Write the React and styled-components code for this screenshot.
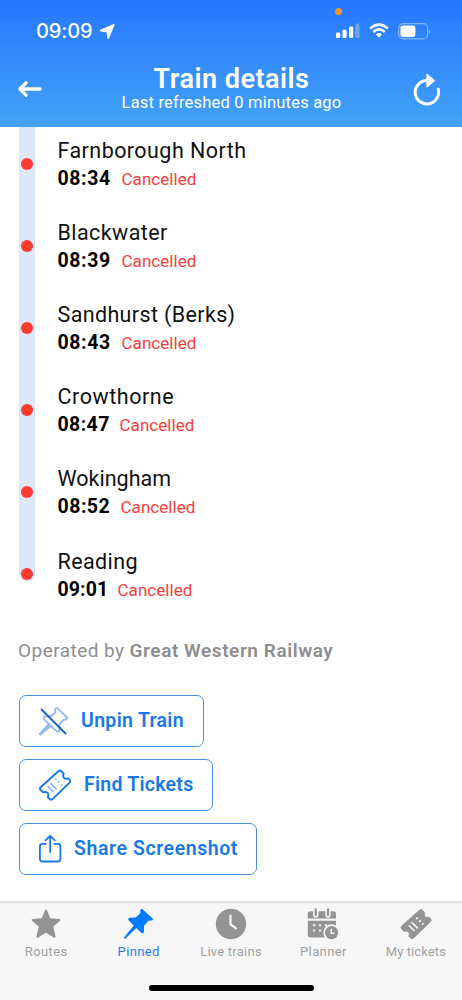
import React from 'react';
import styled, { createGlobalStyle } from 'styled-components';

const GlobalStyle = createGlobalStyle`
  * {
    box-sizing: border-box;
  }
  body {
    margin: 0;
    background: #fff;
    font-family: Roboto, 'Liberation Sans', sans-serif;
  }
`;

const Screen = styled.div`
  position: relative;
  display: flex;
  flex-direction: column;
  width: 462px;
  height: 1000px;
  overflow: hidden;
  background: #fff;
`;

const Header = styled.header`
  flex: none;
  height: 127px;
  color: #fff;
  background: linear-gradient(#2777ff, #43a2f6);
`;

const StatusBar = styled.div`
  display: flex;
  align-items: center;
  justify-content: space-between;
  height: 62px;
  padding: 0 31px 0 36px;
`;

const Clock = styled.div`
  display: flex;
  align-items: center;
  gap: 6px;
  font: 500 20px/24px Inter, sans-serif;
  letter-spacing: -0.1px;
`;

const StatusIcons = styled.div`
  display: flex;
  align-items: center;
  gap: 9px;
`;

const RecordingDot = styled.span`
  position: absolute;
  top: 8px;
  left: 335px;
  width: 7px;
  height: 7px;
  border-radius: 50%;
  background: #f09528;
`;

const NavBar = styled.div`
  display: flex;
  align-items: center;
  justify-content: space-between;
  height: 53px;
  padding: 0 21px 0 18px;
`;

const IconButton = styled.button`
  display: flex;
  padding: 0;
  border: 0;
  color: inherit;
  background: none;
`;

const Heading = styled.div`
  flex: 1;
  padding-left: 7px;
  text-align: center;
`;

const Title = styled.h1`
  margin: 0;
  font-size: 27px;
  font-weight: 600;
  line-height: 28px;
  white-space: nowrap;
  letter-spacing: 0.5px;
`;

const Subtitle = styled.div`
  font-size: 16.5px;
  line-height: 19px;
  white-space: nowrap;
  letter-spacing: 0.2px;
`;

const Stops = styled.ul`
  display: flex;
  flex-direction: column;
  flex: none;
  margin: 0;
  padding: 0 0 0 18.5px;
  list-style: none;
`;

const Stop = styled.li`
  display: flex;
  height: ${({ $last }) => ($last ? 76 : 82.2)}px;
`;

const Track = styled.div`
  flex: none;
  width: 16.5px;
  height: ${({ $last }) => ($last ? '43px' : '100%')};
  padding: 30.5px 0 0 2px;
  border-radius: ${({ $last }) => ($last ? '0 0 7px 7px' : 0)};
  background: #dce8f8;
`;

const Dot = styled.div`
  width: 12px;
  height: 12px;
  border-radius: 50%;
  background: #ff3b30;
`;

const StopBody = styled.div`
  padding: 9.6px 0 0 22.5px;
`;

const StopName = styled.div`
  color: #111;
  font-size: 21.5px;
  line-height: 27px;
  white-space: nowrap;
  letter-spacing: ${({ $tracking }) => $tracking || 0}px;
`;

const StopStatus = styled.div`
  display: flex;
  align-items: baseline;
  padding-top: 3px;
  line-height: 24px;
`;

const Time = styled.span`
  width: ${({ $width }) => $width}px;
  color: #000;
  font-size: 19.5px;
  font-weight: 700;
  letter-spacing: ${({ $tracking }) => $tracking || 0}px;
`;

const Cancelled = styled.span`
  color: #f6403c;
  font-size: 17px;
  letter-spacing: 0.05px;
`;

const Operator = styled.p`
  flex: none;
  margin: 0;
  padding: 25.5px 0 0 18px;
  color: #8e8e90;
  font-size: 19px;
  line-height: 24px;
  white-space: nowrap;

  span {
    letter-spacing: 0.45px;
  }

  b {
    font-weight: 600;
    letter-spacing: 0.56px;
  }
`;

const Actions = styled.div`
  display: flex;
  flex-direction: column;
  align-items: flex-start;
  gap: 12px;
  padding: 32px 0 0 19px;
`;

const ActionButton = styled.button`
  display: flex;
  align-items: center;
  gap: ${({ $gap }) => $gap}px;
  width: ${({ $width }) => $width}px;
  height: 52px;
  padding: 0 0 0 18px;
  border: 1.5px solid #4a8fdc;
  border-radius: 7px;
  color: #1878e8;
  background: #fff;
  font: 600 19.5px/24px Roboto, sans-serif;
  white-space: nowrap;
  letter-spacing: ${({ $tracking }) => $tracking || 0}px;
`;

const TabBar = styled.nav`
  flex: none;
  display: flex;
  height: 99px;
  margin-top: auto;
  border-top: 2px solid #e2e2e2;
  background: #f7f7f7;
`;

const Tab = styled.a`
  display: flex;
  flex: 1;
  flex-direction: column;
  align-items: center;
  gap: 3px;
  padding-top: 5px;
  color: ${({ $active }) => ($active ? '#007aff' : '#949494')};
`;

const TabLabel = styled.span`
  color: ${({ $active }) => ($active ? '#1a80f5' : '#a2a2a2')};
  font-size: 13px;
  line-height: 16px;
  white-space: nowrap;
  letter-spacing: ${({ $tracking }) => $tracking || 0}px;
`;

const HomeIndicator = styled.div`
  position: absolute;
  bottom: 9px;
  left: 149px;
  width: 165px;
  height: 6px;
  border-radius: 3px;
  background: #000;
`;

const LocationIcon = () => (
  <svg width="17" height="17" viewBox="0 0 17 17">
    <path d="M14.9 1.7 1.7 7.6 8.3 8.6 9.2 15.2Z" fill="#fff" stroke="#fff" strokeWidth="1.6" strokeLinejoin="round" />
  </svg>
);

const SignalIcon = () => (
  <svg width="24" height="16" viewBox="0 0 24 16" fill="#fff">
    <rect x="0" y="9.5" width="4.2" height="5.5" rx="1.2" />
    <rect x="6.5" y="6.8" width="4.2" height="8.2" rx="1.2" />
    <rect x="13" y="3.5" width="4.2" height="11.5" rx="1.2" />
    <rect x="19.2" y="0.5" width="4.2" height="14.5" rx="1.2" opacity="0.3" />
  </svg>
);

const WifiIcon = () => (
  <svg width="20" height="16" viewBox="0 0 20 16" fill="none" stroke="#fff" strokeWidth="2.5">
    <path d="M1 5.6Q10-2.4 19 5.6" />
    <path d="M4.3 9Q10 3.8 15.7 9" />
    <path d="M7 11.4Q10 8.8 13 11.4L10 14.5Z" fill="#fff" stroke="none" />
  </svg>
);

const BatteryIcon = () => (
  <svg width="33" height="17" viewBox="0 0 33 17">
    <rect x="0.7" y="0.7" width="29" height="15.2" rx="4.5" fill="none" stroke="#fff" strokeOpacity="0.4" strokeWidth="1.2" />
    <rect x="2.4" y="2.6" width="15" height="11.4" rx="2.4" fill="#fff" />
    <path d="M31 6v5q2-2.5 0-5Z" fill="#fff" opacity="0.5" />
  </svg>
);

const BackIcon = () => (
  <svg width="25" height="18" viewBox="0 0 25 18" fill="none" stroke="#fff" strokeWidth="3.3" strokeLinecap="round" strokeLinejoin="round">
    <path d="M22 9H2.3M8 2.8 1.9 9 8 15.2" />
  </svg>
);

const RefreshIcon = () => (
  <svg width="28" height="34" viewBox="0 0 28 34">
    <path d="M25.2 17.2A11.7 11.7 0 1 1 13.7 8.5" fill="none" stroke="#fff" strokeWidth="3" strokeLinecap="round" />
    <path d="M13.4 2.6Q13.4 1.4 14.5 2L21.3 7.7Q22.2 8.6 21.3 9.4L14.5 15.2Q13.4 16 13.4 14.8Z" fill="#fff" />
  </svg>
);

const PIN = 'M19.5 1.2 29.3 10.2Q30.6 12 28.7 12.5L25.4 12.7 21 17.8 21 23.3Q20.5 26.2 18.3 24.7L13.3 20 2 31 .8 29.8 10.8 17.5 5.6 12.2Q4.4 10.3 6.8 9.8L12.6 9.5 17.4 5.3 17.3 2.2Q18-.3 19.5 1.2Z';

const UnpinIcon = () => (
  <svg width="31" height="31" viewBox="0 0 31 31" fill="none" strokeLinejoin="round" strokeLinecap="round">
    <path d="M17 3.2Q18.3 1.2 20 2.8L28.4 10.6Q30 12.4 28 13.4L25.2 14.2 21.6 18.2 21.6 23Q21 27 18 24.8L6.2 13.3Q4.8 10.8 7.4 10.3L13.3 10 17.2 6.8Z" stroke="#8dbaf0" strokeWidth="1.8" />
    <path d="M11 18 1.8 28 2.3 28.6 12.8 19.8" stroke="#8dbaf0" strokeWidth="2" />
    <path d="m3.5 3.5 24 24" stroke="#1764cc" strokeWidth="1.8" />
  </svg>
);

const TICKET = 'M20.5 1.3Q22-.1 23.5 1.3L26 3.8Q24.6 6.5 26.4 8.2 28.2 9.6 30.7 8.6L32.1 10Q33.4 11.5 32 13L14.5 30Q13 31.3 11.5 30L9.6 28.1Q11 25.3 9.3 23.6 7.3 21.9 4.8 23.1L2.2 20.7Q.8 19.2 2.2 17.8Z';

const TicketOutlineIcon = () => (
  <svg width="33" height="33" viewBox="-0.5 0 34 32" fill="none" stroke="#1878e8">
    <path d={TICKET} strokeWidth="2" strokeLinejoin="round" />
    <path d="m9.5 16.7 6 6M12.4 13.6l6.4 6.4" strokeWidth="1.4" opacity="0.6" />
    <path d="m17.3 9 7.2 7" strokeWidth="1.6" strokeDasharray="1.8 2.3" opacity="0.6" />
  </svg>
);

const ShareIcon = () => (
  <svg width="24" height="30" viewBox="-0.4 0 24 30" fill="none" stroke="#1878e8" strokeWidth="1.8" strokeLinecap="round" strokeLinejoin="round">
    <path d="M7.5 9.8H4Q1.5 9.8 1.5 12.3V24.7Q1.5 27.5 4.2 27.5H19.3Q22 27.5 22 24.7V12.3Q22 9.8 19.5 9.8H16M11.8 18V2M7.2 6.3 11.8 1.8 16.4 6.3" />
  </svg>
);

const StarIcon = () => (
  <svg width="32" height="33" viewBox="0 0 32 33" fill="currentColor">
    <path d="M15 2.2Q16 .6 17 2.2L20.3 10.2 29.5 11Q31.2 11.4 30 12.7L23.2 18.8 25.6 28.5Q25.5 30.4 23.8 29.5L16 24.7 8.2 29.5Q6.5 30.4 6.4 28.5L8.8 18.8 2 12.7Q.8 11.4 2.5 11L11.7 10.2Z" />
  </svg>
);

const PinIcon = () => (
  <svg width="32" height="33" viewBox="0 0 32 33" fill="currentColor">
    <path d={PIN} />
  </svg>
);

const ClockIcon = () => (
  <svg width="32" height="33" viewBox="0 0 32 33">
    <circle cx="16" cy="16" r="15.2" fill="currentColor" />
    <path d="M15.5 7.5V16.5L21 20.4" fill="none" stroke="#f7f7f7" strokeWidth="2.2" strokeLinecap="round" />
  </svg>
);

const PlannerIcon = () => (
  <svg width="32" height="33" viewBox="0 0 32 33" fill="currentColor">
    <path d="M.8 10.5V6Q.8 3.2 3.5 3.2H26.3Q29 3.2 29 6V10.5ZM.8 12.8H29V29.5H3.5Q.8 29.5.8 26.8Z" />
    <path d="M8.8 0V7M21 0V7" stroke="#f7f7f7" strokeWidth="5.4" strokeLinecap="round" />
    <path d="M8.8 1.4V7M21 1.4V7" stroke="currentColor" strokeWidth="2.3" strokeLinecap="round" />
    <path d="M6.2 17.2h2M12 17.2h2M17.8 17.2h2M6.2 22.4h2M12 22.4h2" stroke="#f7f7f7" strokeWidth="2" />
    <circle cx="24.6" cy="24.6" r="8.3" fill="#f7f7f7" />
    <circle cx="24.6" cy="24.6" r="6.6" />
    <path d="M24.2 20.7V25.3H27.6" fill="none" stroke="#f7f7f7" strokeWidth="1.6" />
  </svg>
);

const TicketIcon = () => (
  <svg width="32" height="33" viewBox="0.5 0 33 32">
    <path d={TICKET} fill="currentColor" stroke="currentColor" strokeWidth="1" strokeLinejoin="round" />
    <path d="m9.5 16.7 6 6M12.4 13.6l6.4 6.4" stroke="#f7f7f7" strokeWidth="1.6" />
    <path d="m17.3 9 7.2 7" stroke="#f7f7f7" strokeWidth="2" strokeDasharray="1.9 2.3" />
  </svg>
);

const stops = [
  { name: 'Farnborough North', time: '08:34', width: 64, tracking: 0.44, timeTracking: 0.6 },
  { name: 'Blackwater', time: '08:39', width: 64, tracking: 0.42, timeTracking: 0.6 },
  { name: 'Sandhurst (Berks)', time: '08:43', width: 64, tracking: 0.36, timeTracking: 0.6 },
  { name: 'Crowthorne', time: '08:47', width: 62, tracking: 0.55, timeTracking: 0.4 },
  { name: 'Wokingham', time: '08:52', width: 63, tracking: 0.02, timeTracking: 0.5 },
  { name: 'Reading', time: '09:01', width: 60, tracking: 0.4, timeTracking: 0.1 }
];

const actions = [
  { label: 'Unpin Train', icon: <UnpinIcon />, width: 185, gap: 12, tracking: 0.32 },
  { label: 'Find Tickets', icon: <TicketOutlineIcon />, width: 194, gap: 13, tracking: 0.25 },
  { label: 'Share Screenshot', icon: <ShareIcon />, width: 238, gap: 12, tracking: 0.58 }
];

const tabs = [
  { label: 'Routes', icon: <StarIcon />, tracking: 0.4 },
  { label: 'Pinned', icon: <PinIcon />, active: true, tracking: 0.35 },
  { label: 'Live trains', icon: <ClockIcon />, tracking: 0.25 },
  { label: 'Planner', icon: <PlannerIcon />, tracking: 0.4 },
  { label: 'My tickets', icon: <TicketIcon />, tracking: 0.1 }
];

const App = () => (
  <Screen>
    <GlobalStyle />
    <Header>
      <StatusBar>
        <Clock>09:09 <LocationIcon /></Clock>
        <StatusIcons>
          <SignalIcon />
          <WifiIcon />
          <BatteryIcon />
        </StatusIcons>
      </StatusBar>
      <RecordingDot />
      <NavBar>
        <IconButton aria-label="Back"><BackIcon /></IconButton>
        <Heading>
          <Title>Train details</Title>
          <Subtitle>Last refreshed 0 minutes ago</Subtitle>
        </Heading>
        <IconButton aria-label="Refresh"><RefreshIcon /></IconButton>
      </NavBar>
    </Header>
    <Stops>
      {stops.map(({ name, time, width, tracking, timeTracking }, i) => (
        <Stop key={name} $last={i === stops.length - 1}>
          <Track $last={i === stops.length - 1}><Dot /></Track>
          <StopBody>
            <StopName $tracking={tracking}>{name}</StopName>
            <StopStatus>
              <Time $width={width} $tracking={timeTracking}>{time}</Time>
              <Cancelled>Cancelled</Cancelled>
            </StopStatus>
          </StopBody>
        </Stop>
      ))}
    </Stops>
    <Operator><span>Operated by </span><b>Great Western Railway</b></Operator>
    <Actions>
      {actions.map(({ label, icon, width, gap, tracking }) => (
        <ActionButton key={label} $width={width} $gap={gap} $tracking={tracking}>{icon}{label}</ActionButton>
      ))}
    </Actions>
    <TabBar>
      {tabs.map(({ label, icon, active, tracking }) => (
        <Tab key={label} $active={active}>
          {icon}
          <TabLabel $active={active} $tracking={tracking}>{label}</TabLabel>
        </Tab>
      ))}
    </TabBar>
    <HomeIndicator />
  </Screen>
);

export default App;
